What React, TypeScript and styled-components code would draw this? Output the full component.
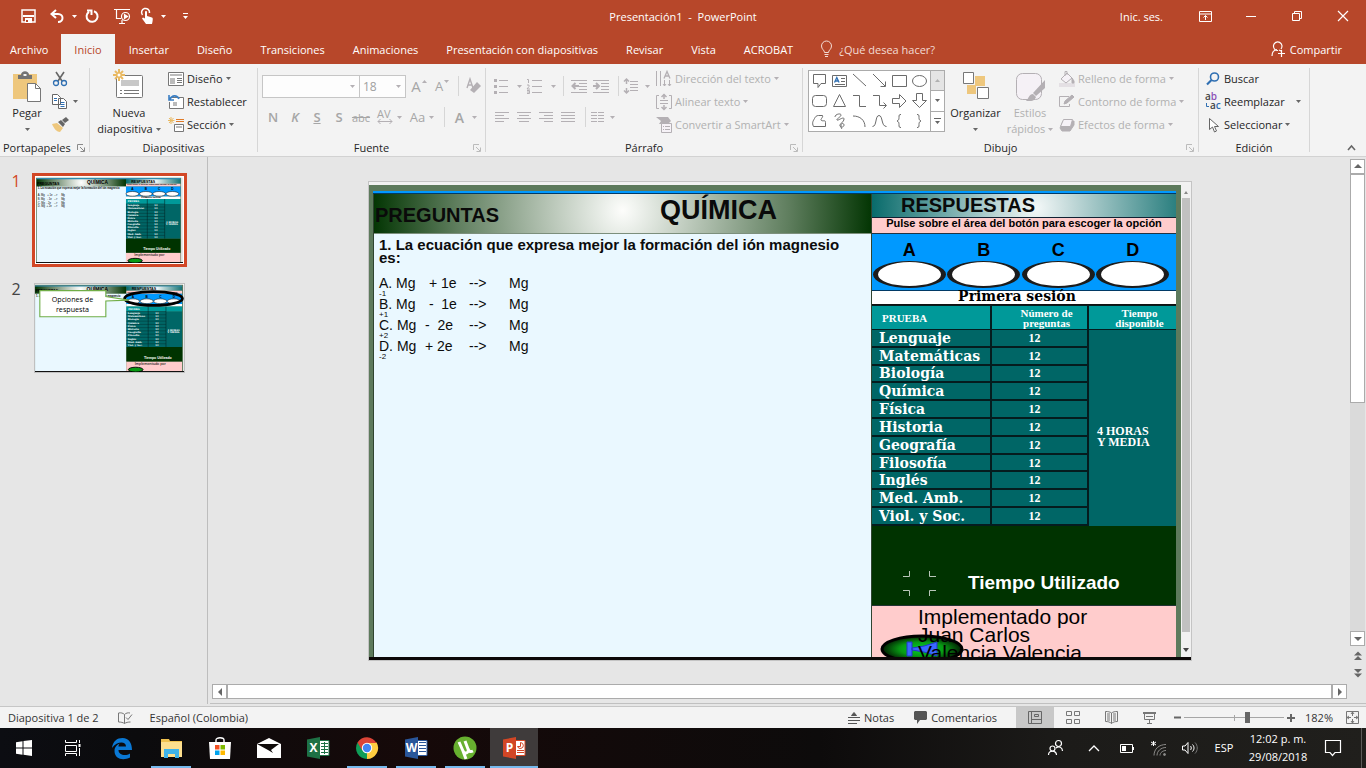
import React from "react";
import styled, { createGlobalStyle, css } from "styled-components";

const UI = `"Open Sans", "Noto Sans", sans-serif`;
const ARIAL = `"Liberation Sans", Arial, sans-serif`;
const SERIF = `"DejaVu Serif", serif`;
const TIMES = `"Liberation Serif", "Times New Roman", serif`;

const GlobalStyle = createGlobalStyle`
  *, *::before, *::after { box-sizing: border-box; }
  body { margin: 0; font-family: ${UI}; font-size: 11px; color: #262626; overflow: hidden; }
  button, input, select { font: inherit; color: inherit; }
  button { border: 0; background: none; padding: 0; cursor: default; }
  h1, h2, p, ol, ul { margin: 0; padding: 0; font: inherit; list-style: none; }
  svg { display: block; flex: none; overflow: visible; }
`;

const Window = styled.div`
  display: flex;
  flex-direction: column;
  min-height: 100vh;
  background: #e6e6e6;
`;

/* ---------- title bar ---------- */

const TitleBar = styled.header`
  display: grid;
  grid-template-columns: 1fr auto 1fr;
  align-items: center;
  height: 32px;
  background: #b7472a;
  color: #fff;
`;

const QuickAccess = styled.div`
  display: flex;
  align-items: center;
  padding-left: 21px;
`;

const QuickButton = styled.button<{ $w: number }>`
  display: flex;
  align-items: center;
  justify-content: flex-start;
  gap: 8px;
  width: ${(p) => p.$w}px;
  height: 24px;
  color: #fff;
`;

const WindowControls = styled.div`
  display: flex;
  align-items: center;
  justify-content: flex-end;
`;

const WindowButton = styled.button`
  display: flex;
  align-items: center;
  justify-content: center;
  width: 46px;
  height: 30px;
`;

const SignIn = styled.a`
  color: #fff;
  text-decoration: none;
  margin-right: 19px;
`;

/* ---------- tabs ---------- */

const TabBar = styled.nav`
  display: flex;
  align-items: stretch;
  height: 32px;
  padding: 2px 24px 0 0;
  background: #b7472a;
  color: #fff;
`;

const Tab = styled.button<{ $active?: boolean; $file?: boolean }>`
  padding: 0 14px;
  color: #fff;
  white-space: nowrap;
  ${(p) => p.$file && css`padding: 0 13px 0 10px;`}
  ${(p) =>
    p.$active &&
    css`
      padding: 0 13px;
      background: #f3f3f3;
      color: #b7472a;
    `}
`;

const TellMe = styled.button`
  display: flex;
  align-items: center;
  gap: 7px;
  margin-left: 14px;
  color: #f3dcd5;
`;

const Share = styled.button`
  display: flex;
  align-items: center;
  gap: 4px;
  margin-left: auto;
  color: #fff;
`;

/* ---------- ribbon ---------- */

const Ribbon = styled.div`
  display: flex;
  height: 93px;
  padding: 4px 8px 0 0;
  background: #f3f3f3;
  border-bottom: 1px solid #d2d2d2;
`;

const Group = styled.section<{ $w: number }>`
  display: flex;
  flex-direction: column;
  flex: none;
  width: ${(p) => p.$w}px;
  padding-right: 1px;
  background: linear-gradient(#d6d6d6, #d6d6d6) right top / 1px 84px no-repeat;
`;

const GroupBody = styled.div<{ $pad?: number }>`
  display: flex;
  flex: 1;
  padding-left: ${(p) => p.$pad ?? 0}px;
`;

const GroupFoot = styled.div`
  display: grid;
  grid-template-columns: 16px 1fr 16px;
  align-items: center;
  height: 17px;
  line-height: 16px;
  text-align: center;
  white-space: nowrap;
`;

const FootLabel = styled.h2<{ $left?: boolean }>`
  grid-column: ${(p) => (p.$left ? "1 / 3" : "2")};
  ${(p) => p.$left && css`padding-left: 3px; text-align: left;`}
`;

const Launcher = styled.button`
  grid-column: 3;
  display: flex;
  padding-left: 4px;
`;

const BigButton = styled.button<{ $w: number; $off?: boolean }>`
  display: flex;
  flex-direction: column;
  align-items: center;
  justify-content: flex-start;
  flex: none;
  width: ${(p) => p.$w}px;
  line-height: 16px;
  white-space: nowrap;
  color: ${(p) => (p.$off ? "#b1b1b1" : "#262626")};
  svg.big { margin-bottom: 3px; }
`;

const CaretLine = styled.span`
  display: flex;
  align-items: center;
  justify-content: center;
  gap: 3px;
  height: 16px;
`;

const CommandList = styled.div<{ $gap?: number }>`
  display: flex;
  flex-direction: column;
  gap: 2px;
  padding-left: ${(p) => p.$gap ?? 0}px;
`;

const Command = styled.button<{ $off?: boolean; $gap?: number }>`
  display: flex;
  align-items: center;
  gap: ${(p) => p.$gap ?? 3}px;
  height: 21px;
  white-space: nowrap;
  color: ${(p) => (p.$off ? "#b1b1b1" : "#262626")};
`;

const ToolRows = styled.div`
  display: flex;
  flex-direction: column;
  padding-top: 7px;
  gap: 9px;
`;

const ToolRow = styled.div`
  display: flex;
  align-items: center;
  height: 22px;
`;

const Tool = styled.button<{ $w?: number; $size?: number; $gap?: number }>`
  display: flex;
  align-items: center;
  justify-content: center;
  gap: ${(p) => p.$gap ?? 4}px;
  flex: none;
  width: ${(p) => p.$w ?? 22}px;
  height: 22px;
  font-size: ${(p) => p.$size ?? 13}px;
  color: #a6a6a6;
  b { font-weight: 600; }
`;

const ToolDivider = styled.span`
  width: 1px;
  height: 20px;
  margin: 0 4px 0 6px;
  background: #d6d6d6;
`;

const Combo = styled.label<{ $w: number }>`
  display: flex;
  align-items: center;
  width: ${(p) => p.$w}px;
  height: 23px;
  padding: 0 4px 0 3px;
  border: 1px solid #c6c6c6;
  background: #fdfdfd;
  color: #a0a0a0;
  font-size: 12px;
  & + & { border-left: 0; }
  select {
    flex: 1;
    min-width: 0;
    border: 0;
    padding: 0;
    background: none;
    appearance: none;
    opacity: 1;
  }
`;

const Gallery = styled.div`
  display: flex;
  width: 137px;
  height: 62px;
  margin-top: 2px;
  border: 1px solid #ababab;
  background: #fff;
`;

const ShapeGrid = styled.div`
  display: grid;
  flex: 1;
  grid-template-columns: repeat(6, 1fr);
  grid-template-rows: repeat(3, 1fr);
  padding: 0 1px;
`;

const ShapeButton = styled.button`
  display: flex;
  align-items: center;
  justify-content: center;
`;

const GalleryNav = styled.div`
  display: flex;
  flex-direction: column;
  width: 14px;
  border-left: 1px solid #ababab;
  button {
    display: flex;
    align-items: center;
    justify-content: center;
    flex: 1;
    & + button { border-top: 1px solid #ababab; }
    &:disabled { background: #e4e4e4; }
  }
`;

const Collapse = styled.button`
  display: flex;
  align-items: flex-end;
  margin-left: auto;
  padding-bottom: 5px;
  padding-right: 2px;
`;

/* ---------- workspace ---------- */

const Workspace = styled.main`
  display: flex;
  flex: 1;
  padding-bottom: 2px;
`;

const Sidebar = styled.aside`
  flex: none;
  width: 208px;
  padding-top: 16px;
  border-right: 1px solid #bdbdbd;
`;

const ThumbList = styled.ol`
  display: flex;
  flex-direction: column;
  gap: 14px;
`;

const ThumbItem = styled.li<{ $active?: boolean }>`
  display: flex;
  font-size: 16px;
  line-height: 17px;
  color: ${(p) => (p.$active ? "#d24726" : "#444")};
  span { width: 32px; text-align: center; }
`;

const ThumbFrame = styled.button<{ $active?: boolean }>`
  width: 155px;
  height: 94px;
  border: ${(p) => (p.$active ? "3px solid #d24726" : "2px solid transparent")};
  svg {
    width: 100%;
    height: 100%;
    overflow: hidden;
    background: #fff;
    border: 1px solid ${(p) => (p.$active ? "#fff" : "#c0c0c0")};
  }
`;

const Editor = styled.section`
  display: flex;
  flex: 1;
  margin-left: 2px;
  border-bottom: 1px solid #c0c0c0;
`;

const StageColumn = styled.div`
  display: flex;
  flex-direction: column;
  flex: 1;
`;

const Stage = styled.div`
  display: flex;
  flex: 1;
  padding: 24px 156px 23px 158px;
`;

const HScroll = styled.div`
  display: flex;
  height: 15px;
  margin: 0 1px 4px 2px;
  border: 1px solid #ababab;
  background: #fff;
`;

const HScrollEnd = styled.button<{ $right?: boolean }>`
  display: flex;
  align-items: center;
  justify-content: center;
  width: 15px;
  ${(p) =>
    p.$right
      ? css`border-left: 2px solid #ababab; margin-left: auto;`
      : css`border-right: 2px solid #ababab;`}
`;

const VScroll = styled.div`
  display: flex;
  flex-direction: column;
  align-items: center;
  width: 15px;
  margin: 2px 1px 0 2px;
`;

const VButton = styled.button<{ $plain?: boolean }>`
  display: flex;
  align-items: center;
  justify-content: center;
  width: 15px;
  height: ${(p) => (p.$plain ? 18 : 15)}px;
  ${(p) => !p.$plain && css`border: 1px solid #ababab; background: #fff;`}
`;

const VTrack = styled.div`
  flex: 1;
  width: 15px;
  background: #dadada;
`;

const VThumb = styled.div`
  height: 50%;
  border: 1px solid #ababab;
  background: #fff;
`;

const VEnd = styled.div`
  height: 21px;
`;

/* ---------- slide ---------- */

const SlideBox = styled.article`
  display: flex;
  flex-direction: column;
  flex: 1;
  height: 480px;
  padding-top: 3px;
  border: 1px solid #c4c4c4;
  background: #f2f2f2;
`;

const SlideBody = styled.div`
  display: flex;
  flex: 1;
  min-height: 0;
  border-bottom: 3px solid #0c0808;
`;

const GreenFrame = styled.div`
  display: flex;
  flex-direction: column;
  flex: 1;
  padding: 6px 5px 0 4px;
  background: #5d7a5c;
`;

const BlueRule = styled.div`
  height: 3px;
  background: #0099ff;
  border-bottom: 1px solid #013a66;
`;

const Columns = styled.div`
  display: flex;
  flex: 1;
  min-height: 0;
`;

const InnerScroll = styled.div`
  display: flex;
  flex-direction: column;
  align-items: center;
  width: 10px;
  padding: 5px 1px 5px 1px;
  gap: 4px;
  background: #f1f1f1;
  i { flex: 1; width: 8px; background: #c1c1c1; margin-bottom: 12px; }
`;

const Questions = styled.section`
  display: flex;
  flex-direction: column;
  flex: 1;
  border: 1px solid #2f4430;
  border-width: 0 1px;
  background: #eaf8ff;
  color: #0c0c0c;
  font-family: ${ARIAL};
`;

const QuestionHead = styled.div`
  display: flex;
  height: 40px;
  padding: 8px 0 0 1px;
  border-bottom: 1px solid #7c8f7c;
  background: radial-gradient(circle 252px at 50% 42%, #fdfdfb 0%, #f1f4f0 5%, #5f7e5e 66%, #003300 100%);
`;

const Heading = styled.h1`
  font: 700 20px/26px ${ARIAL};
  color: #0a0a0a;
`;

const SubjectHeading = styled(Heading)`
  margin: -5px 94px 0 auto;
  font-size: 27px;
`;

const QuestionText = styled.div`
  padding: 4px 5px;
`;

const Prompt = styled.p`
  max-width: 476px;
  font: 700 15px/13px ${ARIAL};
`;

const Options = styled.ol`
  margin-top: 12px;
`;

const Option = styled.li`
  display: grid;
  grid-template-columns: 46px 44px 40px auto;
  font-size: 14px;
  line-height: 14px;
  white-space: pre;
  small { grid-column: 1; font-size: 8px; line-height: 7px; }
`;

const Answers = styled.section`
  display: flex;
  flex-direction: column;
  flex: none;
  width: 304px;
  background: #ffcccc;
  color: #000;
`;

const AnswerHead = styled.div`
  height: 24px;
  padding-left: 29px;
  border-bottom: 1px solid #123;
  background: radial-gradient(circle 170px at 54% 60%, #f4f8f8, #c4dada 20%, #006666);
  h1 { line-height: 22px; }
`;

const Notice = styled.p`
  height: 16px;
  border-bottom: 1px solid #234;
  font: 700 11px/11px ${ARIAL};
  text-align: center;
  white-space: nowrap;
`;

const Letters = styled.div`
  display: grid;
  grid-template-columns: repeat(4, 1fr);
  height: 57px;
  padding: 5px 6px 0 0;
  background: #0099ff;
  border-bottom: 1px solid #013a66;
`;

const Letter = styled.label`
  display: flex;
  flex-direction: column;
  align-items: center;
  font: 700 18px/22px ${ARIAL};
`;

const OvalButton = styled.button`
  width: 73px;
  height: 27px;
  border: solid #1c1c1c;
  border-width: 1px 5px 2px 5px;
  border-radius: 50%;
  background: #fff;
`;

const SessionTitle = styled.h2`
  height: 14px;
  background: #fff;
  font: 700 14px/11px ${SERIF};
  text-align: center;
  padding-right: 14px;
  border-bottom: 1px solid #111;
`;

const ExamTable = styled.table`
  width: 100%;
  height: 221px;
  border-collapse: collapse;
  table-layout: fixed;
  background: #006666;
  color: #fff;
  th, td { padding: 0; border: 2px solid #051c1e; border-top-width: 1px; border-bottom-width: 1px; }
  th:first-child, td:first-child { border-left: 0; }
  thead th:last-child, td[rowspan] { border-right: 0; }
  thead th { height: 24px; padding-left: 14px; background: #009999; font: 700 11px/10px ${TIMES}; }
  thead th:first-child { padding-left: 10px; text-align: left; }
  tbody th { padding-left: 7px; text-align: left; font: 700 14px/14px ${SERIF}; border-bottom: 2px solid #051c1e; }
  tbody td { padding-right: 10px; text-align: center; font: 700 12px/14px ${TIMES}; border-bottom: 2px solid #051c1e; }
  tbody td[rowspan] { padding: 18px 0 0 8px; text-align: left; font: 700 12px/11px ${TIMES}; border-bottom: 0; }
`;

const TimeUsed = styled.div`
  display: flex;
  align-items: center;
  height: 79px;
  padding: 35px 0 0 31px;
  gap: 32px;
  background: #003300;
  color: #fff;
  font: 700 19px/20px ${ARIAL};
`;

const Credits = styled.div`
  display: grid;
  flex: 1;
  min-height: 0;
  overflow: hidden;
  border-top: 1px solid #233;
  & > * { grid-area: 1 / 1; }
  svg { margin: 29px 0 0 8px; }
  p { padding: 2px 0 0 46px; font: 21px/18px ${ARIAL}; z-index: 1; }
`;

/* ---------- status bar ---------- */

const StatusBar = styled.footer`
  display: flex;
  align-items: center;
  height: 22px;
  padding: 0 7px 0 8px;
  border-top: 1px solid #c6c6c6;
  background: #f3f3f3;
  color: #333;
`;

const StatusButton = styled.button<{ $ml?: number }>`
  display: flex;
  align-items: center;
  gap: 4px;
  margin-left: ${(p) => p.$ml ?? 0}px;
`;

const StatusRight = styled.div`
  display: flex;
  align-items: center;
  margin-left: auto;
  height: 100%;
`;

const ViewButton = styled.button<{ $on?: boolean }>`
  display: flex;
  align-items: center;
  justify-content: center;
  width: 38px;
  height: 100%;
  background: ${(p) => (p.$on ? "#c8c8c8" : "none")};
`;

const Views = styled.div`
  display: flex;
  height: 100%;
  margin: 0 6px 0 19px;
`;

const Zoom = styled.input`
  appearance: none;
  width: 100px;
  height: 12px;
  margin: 0 3px;
  background:
    linear-gradient(#a6a6a6, #a6a6a6) center / 100% 1px no-repeat,
    linear-gradient(#a6a6a6, #a6a6a6) center / 1px 6px no-repeat;
  &::-webkit-slider-thumb { appearance: none; width: 5px; height: 11px; background: #666; }
`;

const ZoomValue = styled.button`
  width: 42px;
  padding-left: 6px;
  margin-right: 9px;
`;

/* ---------- taskbar ---------- */

const Taskbar = styled.nav`
  display: flex;
  height: 40px;
  background: linear-gradient(90deg, #0c0d12 0, #0b0b0d 10%, #160909 30%, #0d0b0b 60%, #1c1b19 78%, #201f1c);
  color: #fff;
`;

const TaskList = styled.div`
  display: flex;
  gap: 1px;
`;

const TaskButton = styled.button<{ $open?: boolean; $active?: boolean }>`
  display: flex;
  align-items: center;
  justify-content: center;
  width: 48px;
  height: 40px;
  background:
    linear-gradient(#76b9ed, #76b9ed) center bottom / ${(p) => (p.$active ? "48px 2px" : p.$open ? "40px 2px" : "0 0")} no-repeat,
    ${(p) => (p.$active ? "#3f3b3b" : "transparent")};
`;

const Tray = styled.div`
  display: flex;
  align-items: center;
  margin-left: auto;
`;

const TrayButton = styled.button<{ $w: number }>`
  display: flex;
  flex-direction: column;
  align-items: center;
  justify-content: center;
  width: ${(p) => p.$w}px;
  height: 100%;
  line-height: 18px;
  white-space: nowrap;
`;

const ShowDesktop = styled.button`
  width: 5px;
  height: 100%;
  margin-left: 8px;
  border-left: 1px solid #5c5b59;
`;

/* ---------- icon drawings ---------- */

type SvgProps = { w: number; h: number; children: React.ReactNode; stroke?: string; sw?: number; className?: string };
const Svg = ({ w, h, children, stroke = "currentColor", sw = 1, className }: SvgProps) => (
  <svg className={className} width={w} height={h} viewBox={`0 0 ${w} ${h}`} fill="none" stroke={stroke} strokeWidth={sw} aria-hidden="true">
    {children}
  </svg>
);

const Caret = ({ c = "#666" }: { c?: string }) => (
  <Svg w={5} h={3} stroke="none"><path fill={c} d="M0 0h5L2.500 3z" /></Svg>
);

const Tri = ({ d, c = "#666" }: { d: "up" | "down" | "left" | "right"; c?: string }) => {
  const paths = { up: "M0 5 4 1l4 4z", down: "M0 2h8L4 6z", left: "M6 0 2 4l4 4z", right: "M2 0l4 4-4 4z" };
  return <Svg w={8} h={7} stroke="none"><path fill={c} d={paths[d]} /></Svg>;
};

const DoubleTri = ({ up }: { up?: boolean }) => (
  <Svg w={8} h={9} stroke="none">
    <path fill="#666" d={up ? "M0 4.500 4 .5l4 4zM0 9l4-4 4 4z" : "M0 0h8L4 4zM0 4.500h8l-4 4z"} />
  </Svg>
);

const LaunchIcon = ({ c = "#8a8a8a" }: { c?: string }) => (
  <Svg w={8} h={8} stroke={c}><path d="M.5 6V.5H6M3 3l4 4M7.500 3.500v4h-4" /></Svg>
);

const G = "#b4b0b4";

const lines = (x: number, ys: number[], ws: number[][]) =>
  ys.map((y, i) => `M${x + ws[i][0]} ${y}h${ws[i][1]}`).join("");

const shapes = [
  <path d="M1.500 1.500h12v9H9l-3 4v-4H1.500z" />,
  <g><path d="M.5 2.500h14v11H.5zM9 5.500h4M9 8.500h4M3 11.500h10" /><path stroke="#2f6fb2" strokeWidth="1.300" d="M2.500 9.500 4.800 4.500l2.300 5M3.500 8h3" /></g>,
  <path d="M1 1l13 12" />,
  <path d="M1 1l12 12M13.500 8.500v5h-5" />,
  <path d="M.5 2.500h14v11H.5z" />,
  <ellipse cx="7.500" cy="8" rx="7" ry="5.500" />,
  <rect x=".5" y="2.500" width="14" height="11" rx="3" />,
  <path d="M7.500 1.500l6 12h-12z" />,
  <path d="M1 2.500h6.500v11H14" />,
  <path d="M1 2.500h6.500v10H14M11.500 9.500l3 3-3 3" />,
  <path d="M.5 5.500h7v-4l6.500 6.500L7.500 14.500v-4h-7z" />,
  <path d="M4.500.5h6v7h4L7.500 14.500.5 7.500h4z" />,
  <path d="M1.500 13.500c-2-4 0-6 1-8s2-3 4-3h4c1 2-3 4-1 5s4-1 4 2v4z" />,
  <path d="M3 4c0-3 6-4 6-2S4 6 5 7s7-4 7-1-5 5-4 7 4 1 4-1-3-2-3 0 0 3 1 4" />,
  <path d="M1 3c7 0 12 4 12 11" />,
  <path d="M.5 13.500C5 13.500 3 2.500 7 2.500s2 11 7.500 11" />,
  <path d="M9 1.500c-2 0-2 .5-2 3 0 2-.5 3-2 3.500 1.500.5 2 1.500 2 3.500 0 2.500 0 3 2 3" />,
  <path d="M5 1.500c2 0 2 .5 2 3 0 2 .5 3 2 3.500-1.500.5-2 1.500-2 3.500 0 2.500 0 3-2 3" />,
];

const AppTile = ({ color, letter, children }: { color: string; letter: string; children: React.ReactNode }) => (
  <Svg w={23} h={22} stroke="none">
    <path fill="#fff" d="M11 3h11v16H11z" />
    <path fill="none" stroke={color} d="M11 3.500h11v15H11z" />
    {children}
    <path fill={color} d="M0 2.500 13 0v22L0 19.500z" />
    <text x="6.500" y="15" textAnchor="middle" fontSize="12" fontWeight="700" fill="#fff" fontFamily={UI}>{letter}</text>
  </Svg>
);

/* ---------- slide content ---------- */

const exams = ["Lenguaje", "Matemáticas", "Biología", "Química", "Física", "Historia", "Geografía", "Filosofía", "Inglés", "Med. Amb.", "Viol. y Soc."];

const options = [
  ["A. Mg", " + 1e", "-1"],
  ["B. Mg", " -  1e", "+1"],
  ["C. Mg", "-  2e", "+2"],
  ["D. Mg", "+ 2e", "-2"],
];

const Slide = () => (
  <SlideBox>
    <SlideBody>
      <GreenFrame>
        <BlueRule />
        <Columns>
          <Questions>
            <QuestionHead>
              <Heading>PREGUNTAS</Heading>
              <SubjectHeading>QUÍMICA</SubjectHeading>
            </QuestionHead>
            <QuestionText>
              <Prompt>1. La ecuación que expresa mejor la formación del ión magnesio es:</Prompt>
              <Options>
                {options.map(([a, b, c]) => (
                  <Option key={a}>
                    <span>{a}</span><span>{b}</span><span>--&gt;</span><span>Mg</span>
                    <small>{c}</small>
                  </Option>
                ))}
              </Options>
            </QuestionText>
          </Questions>
          <Answers>
            <AnswerHead><Heading>RESPUESTAS</Heading></AnswerHead>
            <Notice>Pulse sobre el área del botón para escoger la opción</Notice>
            <Letters>
              {["A", "B", "C", "D"].map((l) => (
                <Letter key={l}>{l}<OvalButton aria-label={`Opción ${l}`} /></Letter>
              ))}
            </Letters>
            <SessionTitle>Primera sesión</SessionTitle>
            <ExamTable>
              <colgroup><col width="119" /><col width="97" /><col width="88" /></colgroup>
              <thead>
                <tr><th>PRUEBA</th><th>Número de<br />preguntas</th><th>Tiempo<br />disponible</th></tr>
              </thead>
              <tbody>
                {exams.map((name, i) => (
                  <tr key={name}>
                    <th>{name}</th><td>12</td>
                    {i === 0 && <td rowSpan={11}>4 HORAS<br />Y MEDIA</td>}
                  </tr>
                ))}
              </tbody>
            </ExamTable>
            <TimeUsed>
              <Svg w={33} h={25} stroke="#b9c6b9"><path d="M0 5.500h6.500V0M33 5.500h-6.500V0M0 19.500h6.500V25M33 19.500h-6.500V25" /></Svg>
              Tiempo Utilizado
            </TimeUsed>
            <Credits>
              <svg width="84" height="30" viewBox="0 0 84 30" aria-hidden="true">
                <defs><radialGradient id="oval"><stop offset="0" stopColor="#00d62a" /><stop offset=".55" stopColor="#089a14" /><stop offset="1" stopColor="#021c02" /></radialGradient></defs>
                <ellipse cx="42" cy="14" rx="40" ry="13" fill="url(#oval)" stroke="#000" strokeWidth="3" />
                <path d="M27 7h5v14h-5zM32 13l12-2 13-4v14l-13-4-12-2z" fill="#3a68ff" stroke="#2233cc" />
              </svg>
              <p>Implementado por<br />Juan Carlos<br />Valencia Valencia</p>
            </Credits>
          </Answers>
        </Columns>
      </GreenFrame>
      <InnerScroll>
        <Svg w={6} h={4} stroke="none"><path fill="#888" d="M1 4l2-3 2 3z" /></Svg>
        <i />
        <Svg w={6} h={4} stroke="none"><path fill="#444" d="M0 0h6L3 4z" /></Svg>
      </InnerScroll>
    </SlideBody>
  </SlideBox>
);

const Thumbnail = ({ callout }: { callout?: boolean }) => (
  <svg viewBox="369 181 822 480" preserveAspectRatio="xMidYMid slice" role="img" aria-label="Miniatura">
    <defs>
      <radialGradient id="tq" gradientUnits="userSpaceOnUse" cx="622" cy="212" r="250"><stop offset="0" stopColor="#fff" /><stop offset=".66" stopColor="#5f7e5e" /><stop offset="1" stopColor="#030" /></radialGradient>
      <radialGradient id="tr" gradientUnits="userSpaceOnUse" cx="1030" cy="205" r="160"><stop offset="0" stopColor="#fff" /><stop offset="1" stopColor="#066" /></radialGradient>
    </defs>
    <path fill="#5d7a5c" d="M369 185h812v476H369z" />
    <path fill="#e8e8e8" d="M1181 185h10v476h-10z" />
    <path fill="#09f" d="M374 190h802v5H374z" />
    <path fill="url(#tq)" d="M374 194h498v40H374z" />
    <path fill="#eaf8ff" d="M374 234h498v423H374z" />
    <path fill="url(#tr)" d="M872 194h304v24H872z" />
    <path fill="#fcc" d="M872 218h304v16H872zM872 604h304v53H872z" />
    <path fill="#09f" d="M872 234h304v56H872z" />
    <path fill="#fff" d="M872 290h304v14H872z" />
    <path fill="#099" d="M872 304h304v28H872z" />
    <path fill="#066" d="M872 331h304v194H872z" />
    <path fill="#030" d="M872 525h304v79H872z" />
    <path fill="#111" d="M369 656h822v5H369z" />
    {exams.map((_, i) => <path key={i} stroke="#022" strokeWidth="2" d={`M872 ${331 + i * 17.6}h216`} />)}
    <path stroke="#022" strokeWidth="3" d="M991 304v221M1088 304v221" />
    {[908, 983, 1057, 1131].map((x, i) => (
      <g key={x}>
        <ellipse cx={x} cy="275" rx="36" ry="13" fill="#fff" stroke="#111" strokeWidth="3" />
        <text x={x - 6} y="256" fontSize="18" fontWeight="700" fontFamily={ARIAL}>{"ABCD"[i]}</text>
      </g>
    ))}
    <g fontFamily={ARIAL} fontWeight="700" fill="#000">
      <text x="376" y="223" fontSize="20">PREGUNTAS</text>
      <text x="655" y="218" fontSize="27">QUÍMICA</text>
      <text x="901" y="212" fontSize="20">RESPUESTAS</text>
      <text x="878" y="228" fontSize="11">Pulse sobre el área del botón para escoger la opción</text>
      <text x="379" y="250" fontSize="15">1. La ecuación que expresa mejor la formación del ión magnesio</text>
      {!callout && options.map(([a, b], i) => (
        <text key={a} x="380" y={288 + i * 21} fontSize="15" fontWeight="400">
          {a}<tspan x="428">{b}</tspan><tspan x="470">--&gt;</tspan><tspan x="510">Mg</tspan>
        </text>
      ))}
      <text x="968" y="588" fontSize="19" fill="#fff">Tiempo Utilizado</text>
      <text x="918" y="623" fontSize="21" fontWeight="400">Implementado por</text>
    </g>
    <g fontFamily={SERIF} fontWeight="700" fill="#fff" fontSize="13">
      <text x="957" y="301" fill="#000">Primera sesión</text>
      <text x="882" y="321">PRUEBA</text>
      {exams.map((e, i) => <text key={e} x="880" y={344 + i * 17.6}>{e}</text>)}
      {exams.map((e, i) => <text key={e} x="1030" y={344 + i * 17.6}>12</text>)}
      <text x="1096" y="437">4 HORAS</text>
      <text x="1096" y="449">Y MEDIA</text>
    </g>
    <ellipse cx="923" cy="648" rx="40" ry="13" fill="#089a14" stroke="#000" strokeWidth="5" />
    {callout && (
      <g>
        <ellipse cx="1020" cy="260" rx="158" ry="38" fill="none" stroke="#000" strokeWidth="15" />
        <path fill="#fff" stroke="#70ad47" strokeWidth="6" d="M400 217h360v32l125 20-125 5v86H400z" />
        <g fontFamily={UI} fontSize="39" textAnchor="middle">
          <text x="578" y="278">Opciones de</text>
          <text x="578" y="332">respuesta</text>
        </g>
      </g>
    )}
  </svg>
);

/* ---------- ribbon groups ---------- */

const ClipboardGroup = () => (
  <Group $w={90}>
    <GroupBody $pad={2}>
      <BigButton $w={50}>
        <Svg className="big" w={30} h={34} stroke="none">
          <path fill="#eec77d" d="M1 6h24v25H1z" />
          <path fill="#737373" d="M6 11V7h3c0-5 8-5 8 0h3v4z" />
          <path fill="#f3f3f3" d="M11.500 6h3v2h-3z" />
          <path fill="#fff" stroke="#777" d="M15.500 15.500h8l5 5v13h-13z" />
          <path fill="none" stroke="#777" d="M23.500 15.500v5h5" />
        </Svg>
        Pegar
        <CaretLine><Caret /></CaretLine>
      </BigButton>
      <CommandList>
        <Command aria-label="Cortar">
          <Svg w={16} h={16} stroke="#666" sw={1.6}><path d="M4 1l6 9M12 1L6 10" /><circle cx="4" cy="12" r="2.500" stroke="#2f6fb2" strokeWidth="1.300" /><circle cx="12" cy="12" r="2.500" stroke="#2f6fb2" strokeWidth="1.300" /></Svg>
        </Command>
        <Command $gap={6} aria-label="Copiar">
          <Svg w={15} h={15} stroke="#666"><path fill="#fff" d="M.5.5h5l3 3v7h-8zM6.500 4.500h5l3 3v7h-8z" /><path stroke="#2f6fb2" d="M2 4.500h3M2 6.500h3M8.500 8.500h4M8.500 10.500h4M8.500 12.500h4" /></Svg>
          <Caret />
        </Command>
        <Command aria-label="Copiar formato">
          <Svg w={17} h={15} stroke="none"><path fill="#eec77d" d="M0 7l5-1 6 5-3 4c-3 0-6-3-8-8z" /><path fill="#666" d="M6 5l3-2 4 4-2 3zM10 3l4-3 3 3-4 3z" /></Svg>
        </Command>
      </CommandList>
    </GroupBody>
    <GroupFoot><FootLabel $left>Portapapeles</FootLabel><Launcher aria-label="Portapapeles"><LaunchIcon /></Launcher></GroupFoot>
  </Group>
);

const SlidesGroup = () => (
  <Group $w={168}>
    <GroupBody $pad={4}>
      <BigButton $w={70}>
        <Svg className="big" w={32} h={34}>
          <rect x="3.500" y="7.500" width="26" height="22" rx="1" fill="#fff" stroke="#777" />
          <path fill="#c8c8c8" stroke="none" d="M8 12h18v6H8z" />
          <path stroke="#777" d="M7 22.500h2M11 22.500h15M7 25.500h2M11 25.500h15" />
          <path stroke="#e9b961" strokeWidth="2" d="M6 1v12M0 7h12M2 3l8 8M10 3l-8 8" />
          <circle cx="6" cy="7" r="1.500" fill="#fff" stroke="none" />
        </Svg>
        Nueva
        <CaretLine>diapositiva <Caret /></CaretLine>
      </BigButton>
      <CommandList $gap={4}>
        <Command>
          <Svg w={16} h={14} stroke="#777"><path fill="#fff" d="M.5.5h15v13H.5z" /><path fill="#bbb" stroke="none" d="M2 2h12v2H2zM2 6h5v6H2z" /><path d="M9 6.500h5M9 8.500h5M9 10.500h5" /></Svg>
          Diseño <Caret />
        </Command>
        <Command>
          <Svg w={16} h={15} stroke="#777"><path fill="#fff" d="M3.500 3.500h12v11h-14V8" /><path fill="#bbb" stroke="none" d="M5 8h4v4H5z" /><path stroke="#3b7fc4" strokeWidth="1.600" d="M1 1v5h5M1.500 5.500C4 1 9 .5 11 5" /></Svg>
          Restablecer
        </Command>
        <Command>
          <Svg w={16} h={15} stroke="#777"><path stroke="#e07b28" d="M8 2.500h8M8 4.500h8" /><path fill="#fff" d="M6.500 7.500h9v7h-9z" /><path d="M8 10h6" stroke="#bbb" strokeWidth="2" /><path stroke="#e9b961" d="M3 0v7M0 3.500h6.500M1 1l4.500 5M5.500 1L1 6" /></Svg>
          Sección <Caret />
        </Command>
      </CommandList>
    </GroupBody>
    <GroupFoot><FootLabel>Diapositivas</FootLabel></GroupFoot>
  </Group>
);

const FontGroup = () => (
  <Group $w={228}>
    <GroupBody $pad={4}>
      <ToolRows>
        <ToolRow>
          <Combo $w={98}><select aria-label="Fuente" disabled><option></option></select><Caret c={G} /></Combo>
          <Combo $w={46}><select aria-label="Tamaño" disabled><option>18</option></select><Caret c={G} /></Combo>
          <Tool $w={26} $size={15} $gap={1} aria-label="Aumentar tamaño">A<Svg w={5} h={14} stroke="none"><path fill={G} d="M0 4l2.500-3L5 4z" /></Svg></Tool>
          <Tool $w={20} $gap={1} aria-label="Reducir tamaño">A<Svg w={5} h={14} stroke="none"><path fill={G} d="M0 1h5L2.500 4z" /></Svg></Tool>
          <ToolDivider />
          <Tool aria-label="Borrar formato">
            <Svg w={16} h={16} stroke={G} sw={1.4}><path d="M1 10l3-9 3 9M2 7h4" /><path fill={G} stroke="none" d="M4 12l7-8 4 4-7 7z" /></Svg>
          </Tool>
        </ToolRow>
        <ToolRow>
          <Tool><b>N</b></Tool>
          <Tool><b><i>K</i></b></Tool>
          <Tool><b><u>S</u></b></Tool>
          <Tool><b>S</b></Tool>
          <Tool $size={11}><s>abc</s></Tool>
          <Tool $w={34}><Svg w={16} h={14} stroke={G}><text x="0" y="8" fontSize="11" fill="#a6a6a6" stroke="none" fontFamily={UI}>AV</text><path d="M1 11.500h14M3.500 9l-2.500 2.500 2.500 2.500M12.500 9l2.500 2.500-2.500 2.500" /></Svg><Caret c={G} /></Tool>
          <Tool $w={32}>Aa<Caret c={G} /></Tool>
          <ToolDivider />
          <Tool $w={34} $size={14} $gap={8}><b>A</b><Caret c={G} /></Tool>
        </ToolRow>
      </ToolRows>
    </GroupBody>
    <GroupFoot><FootLabel>Fuente</FootLabel><Launcher aria-label="Fuente"><LaunchIcon c="#bbb" /></Launcher></GroupFoot>
  </Group>
);

const ParagraphGroup = () => (
  <Group $w={317}>
    <GroupBody $pad={5}>
      <ToolRows>
        <ToolRow>
          <Tool $w={34} $gap={9} aria-label="Viñetas"><Svg w={14} h={16} stroke={G}><path d="M5 2.500h9M5 8.500h9M5 14.500h9" /><path strokeWidth="3" d="M0 2.500h3M0 8.500h3M0 14.500h3" /></Svg><Caret c={G} /></Tool>
          <Tool $w={32} $gap={9} aria-label="Numeración"><Svg w={15} h={16} stroke={G}><path d="M5 2.500h10M5 8.500h10M5 14.500h10M0 1.500h1.500V5M0 7h2v1.500L0 11h3M0 12.500h2.500v3H0M0 14h2" /></Svg><Caret c={G} /></Tool>
          <ToolDivider />
          <Tool aria-label="Reducir sangría"><Svg w={16} h={14} stroke={G}><path d="M0 1.500h16M8 4.500h8M8 7.500h8M8 10.500h8M0 13.500h16" /><path strokeWidth="2" d="M2 7h6M4.500 4L1.500 7l3 3" /></Svg></Tool>
          <Tool aria-label="Aumentar sangría"><Svg w={16} h={14} stroke={G}><path d="M0 1.500h16M8 4.500h8M8 7.500h8M8 10.500h8M0 13.500h16" /><path strokeWidth="2" d="M0 7h6M3 4l3 3-3 3" /></Svg></Tool>
          <ToolDivider />
          <Tool $w={28} $gap={6} aria-label="Interlineado"><Svg w={15} h={16} stroke={G}><path d="M6 3.500h8M6 6.500h8M6 9.500h8M6 12.500h8" /><path strokeWidth="1.500" d="M2.500 1v5M2.500 10v5M0 3.500L2.500 1 5 3.500M0 12.500L2.500 15 5 12.500" /></Svg><Caret c={G} /></Tool>
        </ToolRow>
        <ToolRow>
          {[
            [[0, 14], [0, 9], [0, 14], [0, 9]],
            [[0, 14], [2, 10], [0, 14], [2, 10]],
            [[0, 14], [5, 9], [0, 14], [5, 9]],
            [[0, 14], [0, 14], [0, 14], [0, 14]],
          ].map((ws, i) => (
            <Tool key={i} aria-label="Alinear"><Svg w={14} h={12} stroke={G}><path d={lines(0, [1.5, 4.5, 7.5, 10.5], ws)} /></Svg></Tool>
          ))}
          <ToolDivider />
          <Tool $w={26} $gap={6} aria-label="Columnas"><Svg w={13} h={12} stroke={G}><path d="M0 1.500h6M0 4.500h6M0 7.500h6M0 10.500h6M7 1.500h6M7 4.500h6M7 7.500h6M7 10.500h6" /></Svg><Caret c={G} /></Tool>
        </ToolRow>
      </ToolRows>
      <CommandList $gap={5}>
        <Command $off>
          <Svg w={16} h={16} stroke={G}><path d="M.5 0v15M4.500 0v15M8.500 9v6M13.500 9v6M7 13l1.500 2 1.500-2M12 13l1.500 2 1.500-2" /><path strokeWidth="1.300" d="M8 7.500l3-7 3 7M9 5h4" /></Svg>
          Dirección del texto <Caret c={G} />
        </Command>
        <Command $off>
          <Svg w={16} h={16} stroke={G}><path d="M3 1.500H.5v13H3M13 1.500h2.500v13H13M4 6.500h8M4 9.500h8" /><path strokeWidth="1.500" d="M8 0v5M5.500 3L8 .5 10.500 3M8 11v5M5.500 13L8 15.500l2.500-2.500" /></Svg>
          Alinear texto <Caret c={G} />
        </Command>
        <Command $off>
          <Svg w={16} h={16} stroke={G}><path fill={G} stroke="none" d="M0 0h12l3 4-3 3H3l2-3z" /><path fill="#f6f2f7" d="M5.500 6.500h10v9h-10z" /><path d="M7 9.500h1M9 9.500h5M7 12.500h1M9 12.500h5" /></Svg>
          Convertir a SmartArt <Caret c={G} />
        </Command>
      </CommandList>
    </GroupBody>
    <GroupFoot><FootLabel>Párrafo</FootLabel><Launcher aria-label="Párrafo"><LaunchIcon c="#bbb" /></Launcher></GroupFoot>
  </Group>
);

const DrawingGroup = () => (
  <Group $w={396}>
    <GroupBody $pad={5}>
      <Gallery>
        <ShapeGrid>
          {shapes.map((s, i) => (
            <ShapeButton key={i} aria-label={`Forma ${i + 1}`}><Svg w={15} h={16} stroke="#6b6b6b">{s}</Svg></ShapeButton>
          ))}
        </ShapeGrid>
        <GalleryNav>
          <button disabled aria-label="Anterior"><Svg w={5} h={3} stroke="none"><path fill="#b0b0b0" d="M0 3h5L2.500 0z" /></Svg></button>
          <button aria-label="Siguiente"><Caret /></button>
          <button aria-label="Más"><Svg w={7} h={7} stroke="none"><path fill="#666" d="M0 0h7v1H0zM1 3h5L3.500 6z" /></Svg></button>
        </GalleryNav>
      </Gallery>
      <BigButton $w={61}>
        <Svg className="big" w={28} h={34}><path fill="#eec77d" stroke="none" d="M13 8h10v10H13zM5 17h9v9H5z" /><path fill="#fff" stroke="#777" d="M1.500 4.500h10v11h-10zM15.500 19.500h11v11h-11z" /></Svg>
        Organizar
        <CaretLine><Caret /></CaretLine>
      </BigButton>
      <BigButton $w={48} $off>
        <Svg className="big" w={30} h={34}><rect x="1.500" y="5.500" width="25" height="26" rx="6" fill="#f5f1f6" stroke="#b4b0b4" /><path fill={G} stroke="none" d="M30 12v8l-9 8-3-3zM18 26l3 3c-2 5-6 4-10 4 3-3 3-7 7-7z" /></Svg>
        Estilos
        <CaretLine>rápidos <Caret c={G} /></CaretLine>
      </BigButton>
      <CommandList $gap={5}>
        <Command $off>
          <Svg w={16} h={16} stroke={G}><path fill="#e4e0e4" stroke="none" d="M0 12h16v4H0z" /><path fill="#f6f2f7" d="M2 8l6-6 5 5-6 5z" /><path d="M6 5V.5h2V4" /><path fill={G} d="M13 7l2 3v2h-2z" /></Svg>
          Relleno de forma <Caret c={G} />
        </Command>
        <Command $off>
          <Svg w={16} h={16} stroke={G}><path d="M10 2.500H.5v10h10V10" /><path fill={G} d="M5 10l1-3 7-6 2 2-7 6z" /></Svg>
          Contorno de forma <Caret c={G} />
        </Command>
        <Command $off>
          <Svg w={16} h={16} stroke={G}><path fill={G} d="M1 11l3-7h11v4l-4 6H3z" /><path fill="#f6f2f7" d="M4.500 2.500h9l-2 7h-10z" /></Svg>
          Efectos de forma <Caret c={G} />
        </Command>
      </CommandList>
    </GroupBody>
    <GroupFoot><FootLabel>Dibujo</FootLabel><Launcher aria-label="Dibujo"><LaunchIcon c="#bbb" /></Launcher></GroupFoot>
  </Group>
);

const EditingGroup = () => (
  <Group $w={111}>
    <GroupBody $pad={6}>
      <CommandList>
        <Command>
          <Svg w={16} h={14} stroke="#2f6fb2" sw={1.6}><circle cx="9.500" cy="5" r="4" /><path strokeWidth="2.200" d="M6.500 8L2 12.500" /></Svg>
          Buscar
        </Command>
        <Command>
          <Svg w={16} h={17} stroke="none">
            <g fontFamily={UI} fontSize="10" fontWeight="600"><text x="0" y="7" fill="#444">a<tspan fill="#8b4fb5">b</tspan></text><text x="5" y="16" fill="#444">a<tspan fill="#2f6fb2">c</tspan></text></g>
            <path fill="none" stroke="#2f6fb2" d="M1.500 10v3.500H4" />
          </Svg>
          Reemplazar &nbsp;&nbsp;<Caret />
        </Command>
        <Command>
          <Svg w={16} h={16} stroke="#666"><path fill="#fff" d="M4.500 1.500v11l3-2.500 2 5 2-1-2-4.500h4z" /></Svg>
          Seleccionar <Caret />
        </Command>
      </CommandList>
    </GroupBody>
    <GroupFoot><FootLabel>Edición</FootLabel></GroupFoot>
  </Group>
);

/* ---------- application ---------- */

export default function App() {
  return (
    <Window>
      <GlobalStyle />
      <TitleBar>
        <QuickAccess>
          <QuickButton $w={29} aria-label="Guardar"><Svg w={15} h={14} sw={1.5}><path d="M1 1h13v12H1z" /><path fill="#fff" stroke="none" d="M2 6h11v2H2zM4 9h7v5H4z" /><path fill="#b7472a" stroke="none" d="M5 11h2v2H5z" /></Svg></QuickButton>
          <QuickButton $w={35} aria-label="Deshacer"><Svg w={14} h={14} sw={2}><path d="M6 1L1.500 5 6 9M2 5h6c6 0 6 8 0 8" /></Svg><Caret c="#fff" /></QuickButton>
          <QuickButton $w={29} aria-label="Repetir"><Svg w={15} h={14} sw={2}><path d="M9 2.200a5.500 5.500 0 1 1-5 .6M2 1.500h4.500V6" /></Svg></QuickButton>
          <QuickButton $w={27} aria-label="Presentación"><Svg w={17} h={16} sw={1.2}><path d="M0 1.500h16M2.500 2v8.500H7M8 12v3M5 15.500h6" /><circle cx="11.500" cy="8.500" r="4" /><path fill="#fff" d="M10.500 6.500v4l3-2z" /></Svg></QuickButton>
          <QuickButton $w={41} aria-label="Modo táctil"><Svg w={12} h={16}><path strokeWidth="1.500" d="M1.500 7a4 4 0 1 1 7-2" /><path fill="#fff" stroke="none" d="M4 4c0-1.500 2-1.500 2 0v4l5 1.500c1 .5 1 2 0 6.500H5L1 10.500l1-1 2 1z" /></Svg><Caret c="#fff" /></QuickButton>
          <QuickButton $w={10} aria-label="Personalizar"><Svg w={7} h={7} stroke="none"><path fill="#fff" d="M1 0h5v1H1zM1 3h5L3.500 6z" /></Svg></QuickButton>
        </QuickAccess>
        <h1>Presentación1 &nbsp;- &nbsp;PowerPoint</h1>
        <WindowControls>
          <SignIn href="#">Inic. ses.</SignIn>
          <WindowButton aria-label="Opciones de cinta"><Svg w={13} h={11}><path d="M.5.5h12v10H.5zM0 3h13M6.500 9V4.500M4.500 6.500l2-2 2 2" /></Svg></WindowButton>
          <WindowButton aria-label="Minimizar"><Svg w={10} h={1}><path d="M0 .5h10" /></Svg></WindowButton>
          <WindowButton aria-label="Restaurar"><Svg w={10} h={10}><path d="M2.500 2.500v-2h7v7h-2M.5 2.500h7v7h-7z" /></Svg></WindowButton>
          <WindowButton aria-label="Cerrar"><Svg w={10} h={10} sw={1.2}><path d="M0 0l10 10M10 0L0 10" /></Svg></WindowButton>
        </WindowControls>
      </TitleBar>

      <TabBar>
        <Tab $file>Archivo</Tab>
        <Tab $active>Inicio</Tab>
        {["Insertar", "Diseño", "Transiciones", "Animaciones", "Presentación con diapositivas", "Revisar", "Vista", "ACROBAT"].map((t) => (
          <Tab key={t}>{t}</Tab>
        ))}
        <TellMe><Svg w={11} h={16}><path d="M3.500 11.500C3.500 9 .5 8.500.5 5a5 5 0 0 1 10 0c0 3.500-3 4-3 6.500zM3.500 13.500h4M4 15.500h3" /></Svg>¿Qué desea hacer?</TellMe>
        <Share><Svg w={15} h={16} sw={1.2}><path d="M1 15c0-4 2-6 5-6.500M7 9.500A4.300 4.300 0 1 1 10 8M8 9l2 1M10.500 9v7M7 12.500h7" /></Svg>Compartir</Share>
      </TabBar>

      <Ribbon>
        <ClipboardGroup /><SlidesGroup /><FontGroup /><ParagraphGroup /><DrawingGroup /><EditingGroup />
        <Collapse aria-label="Contraer"><Svg w={9} h={6} stroke="#666" sw={1.6}><path d="M1 5l3.500-4L8 5" /></Svg></Collapse>
      </Ribbon>

      <Workspace>
        <Sidebar>
          <ThumbList>
            <ThumbItem $active><span>1</span><ThumbFrame $active aria-label="Diapositiva 1"><Thumbnail /></ThumbFrame></ThumbItem>
            <ThumbItem><span>2</span><ThumbFrame aria-label="Diapositiva 2"><Thumbnail callout /></ThumbFrame></ThumbItem>
          </ThumbList>
        </Sidebar>
        <Editor>
          <StageColumn>
            <Stage><Slide /></Stage>
            <HScroll>
              <HScrollEnd aria-label="Izquierda"><Tri d="left" /></HScrollEnd>
              <HScrollEnd $right aria-label="Derecha"><Tri d="right" /></HScrollEnd>
            </HScroll>
          </StageColumn>
          <VScroll>
            <VButton aria-label="Arriba"><Tri d="up" /></VButton>
            <VTrack><VThumb /></VTrack>
            <VButton aria-label="Abajo"><Tri d="down" /></VButton>
            <VButton $plain aria-label="Diapositiva anterior"><DoubleTri up /></VButton>
            <VButton $plain aria-label="Diapositiva siguiente"><DoubleTri /></VButton>
            <VEnd />
          </VScroll>
        </Editor>
      </Workspace>

      <StatusBar>
        <span>Diapositiva 1 de 2</span>
        <StatusButton $ml={19} aria-label="Ortografía"><Svg w={14} h={12} stroke="#777"><path d="M6.500 2.500C5 1 3 .5.5 1v9c2.500 0 4.500.5 6 1.500zM6.500 2.500C8 1 10 .5 12 1M6.500 11.500c1.500-1 3.500-1.500 6-1.500M8 5.500l2 2 4-5" /></Svg></StatusButton>
        <StatusButton $ml={18}>Español (Colombia)</StatusButton>
        <StatusRight>
          <StatusButton><Svg w={12} h={12} stroke="#555"><path d="M0 5.500h12M0 8.500h12M0 11.500h9" /><path fill="#555" d="M3.500 3.500l2.500-3 2.500 3z" /></Svg>Notas</StatusButton>
          <StatusButton $ml={20}><Svg w={13} h={13} stroke="none"><path fill="#555" d="M1 0h11l1 1v7l-1 1H6l-3 4V9H1L0 8V1z" /></Svg>Comentarios</StatusButton>
          <Views>
            <ViewButton $on aria-label="Normal"><Svg w={14} h={13} stroke="#666"><path d="M.5.5h13v12H.5zM3.500.5v12M3.500 8.500h10M6.500 3.500h4v2h-4z" /></Svg></ViewButton>
            <ViewButton aria-label="Clasificador"><Svg w={14} h={13} stroke="#777"><path d="M.5.500h5v4h-5zM8.500.5h5v4h-5zM.5 8.500h5v4h-5zM8.500 8.500h5v4h-5z" /></Svg></ViewButton>
            <ViewButton aria-label="Lectura"><Svg w={13} h={13} stroke="#777"><path d="M6.500 2v10.500M6.500 2C5 .8 3 .5.5.5v10c2.500 0 4.500.5 6 2 1.500-1.500 3.500-2 6-2V.5c-2.500 0-4.500.3-6 1.500zM2 3h3M2 5h3M2 7h3M2 9h3M8 3h3M8 5h3M8 7h3M8 9h3" /></Svg></ViewButton>
            <ViewButton aria-label="Presentación"><Svg w={13} h={12} stroke="#777"><path d="M0 1h13" strokeWidth="2" /><path d="M1.500 2v5.500h10V2M3 4.500h7M6.500 8v3.500M4 11.500h5" /></Svg></ViewButton>
          </Views>
          <StatusButton aria-label="Alejar"><Svg w={7} h={7} sw={2} stroke="#666"><path d="M0 3.500h7" /></Svg></StatusButton>
          <Zoom type="range" min="0" max="100" defaultValue="64" aria-label="Zoom" />
          <StatusButton aria-label="Acercar"><Svg w={8} h={8} sw={2} stroke="#666"><path d="M0 4h8M4 0v8" /></Svg></StatusButton>
          <ZoomValue>182%</ZoomValue>
          <StatusButton aria-label="Ajustar"><Svg w={13} h={13} stroke="#777"><path d="M.5.5h12v12H.5zM6.500 1v4M5 3l1.500-2L8 3M6.500 12V8M5 10l1.500 2L8 10M1 6.500h4M3 5L1 6.500 3 8M12 6.500H8M10 5l2 1.500L10 8" /></Svg></StatusButton>
        </StatusRight>
      </StatusBar>

      <Taskbar>
        <TaskList>
          <TaskButton aria-label="Inicio"><Svg w={16} h={16} stroke="none"><path fill="#fff" d="M0 2.200l6.500-1v6.300H0zM7.500 1L16 0v7.500H7.500zM0 8.500h6.500v6.300l-6.500-1zM7.500 8.500H16V16l-8.500-1.200z" /></Svg></TaskButton>
          <TaskButton aria-label="Vista de tareas"><Svg w={16} h={16} stroke="#fff"><path d="M.5 0v2.500h11V0M.5 5.500h11v6H.5zM.5 16v-2.500h11V16M14.500 0v3M14.500 8v8" /><path strokeWidth="2" d="M14.500 4v3" /></Svg></TaskButton>
          <TaskButton aria-label="Edge"><Svg w={20} h={21} stroke="none"><path fill="#0a78d4" d="M0 10C1 3 5 0 10.500 0 17 0 20 5 20 12H6.500c0 5 7 6.500 11.500 3.500v4C11 23 2.500 21 2.500 13 2.500 9 5 6.500 8 5.500 6.500 6.500 6.500 8 6.500 8.500H14C14 3 5 3 0 10z" /></Svg></TaskButton>
          <TaskButton $open aria-label="Explorador"><Svg w={21} h={19} stroke="none"><path fill="#f0c24f" d="M0 0h8l1 2h12v4H0z" /><path fill="#fddf8e" d="M0 3h21v15H0z" /><path fill="#3fb4ea" d="M3 10h15v9h-4v-4H7v4H3z" /></Svg></TaskButton>
          <TaskButton aria-label="Tienda"><Svg w={22} h={22} stroke="none"><path fill="none" stroke="#fff" strokeWidth="1.400" d="M7 6V3c0-3 8-3 8 0v3" /><path fill="#fff" d="M0 5h22l-1 17H1z" /><path fill="#f25022" d="M6 8h4.500v4.500H6z" /><path fill="#7fba00" d="M11.500 8H16v4.500h-4.500z" /><path fill="#00a4ef" d="M6 13.500h4.500V18H6z" /><path fill="#ffb900" d="M11.500 13.500H16V18h-4.500z" /></Svg></TaskButton>
          <TaskButton aria-label="Correo"><Svg w={24} h={20} stroke="none"><path fill="#fff" d="M0 6l12-6 12 6v14H0z" /><path fill="#100b0b" d="M0 6h22l-8 6 2 3-5-3z" /></Svg></TaskButton>
          <TaskButton aria-label="Excel"><AppTile color="#1e7145" letter="X"><path stroke="#1e7145" d="M14 6.500h7M14 9.500h7M14 12.500h7M14 15.500h7M17.500 5v12" /></AppTile></TaskButton>
          <TaskButton $open aria-label="Chrome"><Svg w={22} h={22} stroke="none"><path fill="#0f9d58" d="M11 11L1.500 5.500A11 11 0 0 0 11 22l4-7z" /><path fill="#ffcd40" d="M11 11L11 22A11 11 0 0 0 20.600 5.500H11z" /><path fill="#db4437" d="M1.500 5.500l4.700 8L11 6h9.500A11 11 0 0 0 1.500 5.500z" /><circle cx="11" cy="11" r="5.200" fill="#fff" /><circle cx="11" cy="11" r="4.200" fill="#4285f4" /></Svg></TaskButton>
          <TaskButton $open aria-label="Word"><AppTile color="#2a569a" letter="W"><path stroke="#2a569a" d="M14 5.500h7M14 8.500h7M14 11.500h7M14 14.500h7" /></AppTile></TaskButton>
          <TaskButton $open aria-label="uTorrent"><Svg w={24} h={24} stroke="none"><circle cx="12" cy="12" r="11.500" fill="#67b02f" /><path fill="none" stroke="#fff" strokeWidth="3" d="M6 6l4 9c1.500 3.500 6.500 2 5-2l-3-8M15 13c1 3 3 3 5 2M10 15l3 8" /></Svg></TaskButton>
          <TaskButton $active aria-label="PowerPoint"><AppTile color="#d24625" letter="P"><path fill="none" stroke="#d24625" d="M17.500 5.500v4h-3a3 3 0 1 0 3-4M14 13.500h7M14 15.500h7" /></AppTile></TaskButton>
        </TaskList>
        <Tray>
          <TrayButton $w={40} aria-label="Contactos"><Svg w={15} h={16} stroke="#fff" sw={1.2}><circle cx="10.500" cy="3.500" r="3" /><circle cx="4.500" cy="8.500" r="2.500" /><path d="M.5 15c0-5 8-5 8 0M8 8c3-2.500 6.500-.5 6.500 3" /></Svg></TrayButton>
          <TrayButton $w={38} aria-label="Iconos ocultos"><Svg w={12} h={7} stroke="#fff" sw={1.3}><path d="M1 6l5-5 5 5" /></Svg></TrayButton>
          <TrayButton $w={28} aria-label="Batería"><Svg w={15} h={9} stroke="#fff"><path d="M.5.5h12v8H.5zM13.500 3v3" /><path fill="#fff" stroke="none" d="M2 2h4v5H2z" /></Svg></TrayButton>
          <TrayButton $w={34} aria-label="Red"><Svg w={15} h={15} stroke="#8c8b89"><path d="M3 14.500C3 8 8 3.500 15 3.500M6 14.500c0-4.500 4-8 9-8M9 14.500c0-3 3-5 6-5" /><circle cx="13.500" cy="13.500" r="1" fill="#8c8b89" /><path stroke="#fff" d="M2.500 0v5M0 1l5 3M5 1L0 4" /></Svg></TrayButton>
          <TrayButton $w={30} aria-label="Volumen"><Svg w={16} h={12} stroke="#fff"><path d="M.5 4v4H3l3 3.500V.5L3 4zM8.500 4c1 1 1 3 0 4M10.500 2.500c2 2 2 5 0 7" /><path stroke="#777" d="M13 .5c3 3 3 8 0 11" /></Svg></TrayButton>
          <TrayButton $w={38}>ESP</TrayButton>
          <TrayButton $w={70}><span>12:02 p. m.</span><span>29/08/2018</span></TrayButton>
          <TrayButton $w={40} aria-label="Notificaciones"><Svg w={16} h={16} stroke="#fff" sw={1.2}><path d="M.5.5h15v12H10l-2.500 3-2.500-3H.5z" /></Svg></TrayButton>
          <ShowDesktop aria-label="Mostrar escritorio" />
        </Tray>
      </Taskbar>
    </Window>
  );
}
